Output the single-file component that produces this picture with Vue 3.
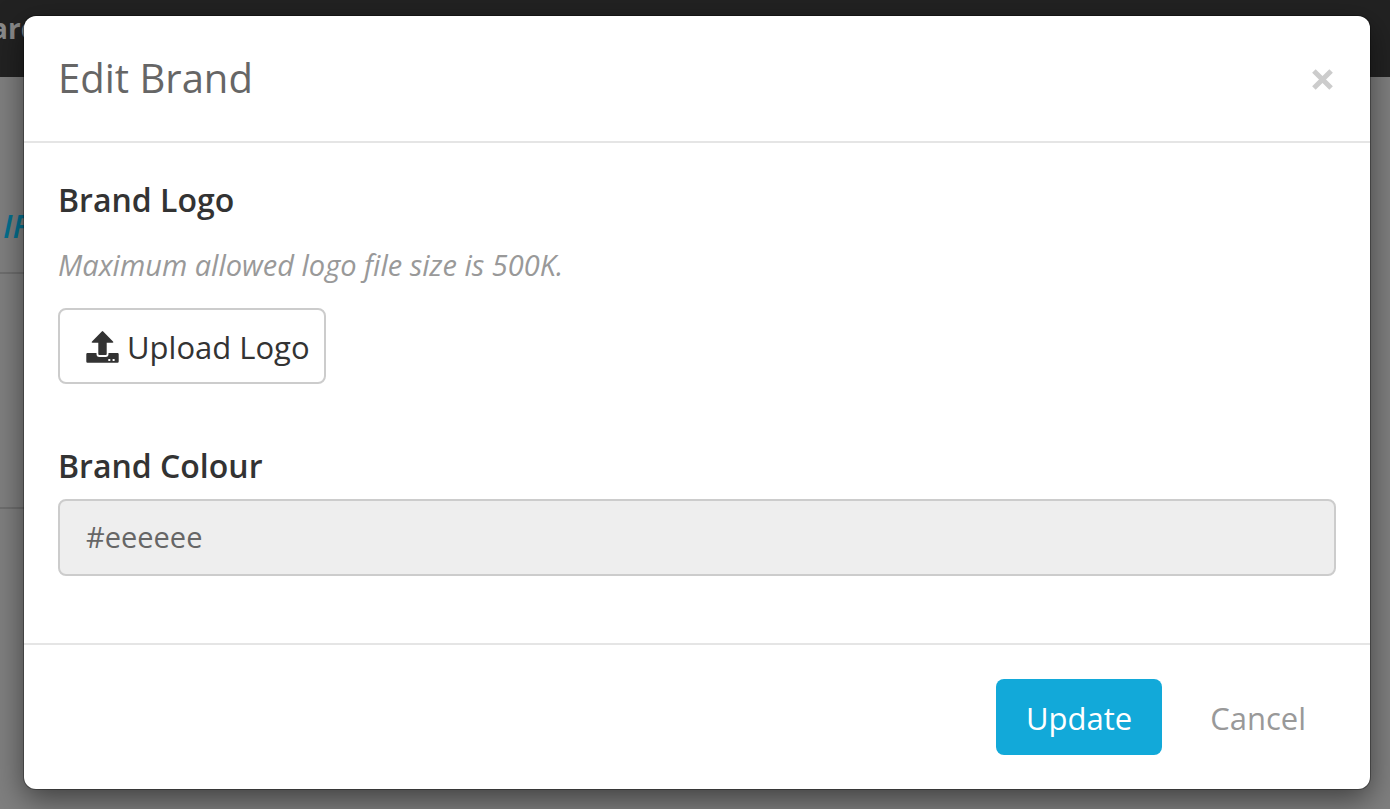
<script setup>
import { ref } from 'vue'

const colour = ref('#eeeeee')
</script>

<template>
  <div class="page">
    <div class="backdrop-page" aria-hidden="true">
      <div class="topbar"><span class="nav-text">arc</span></div>
      <div class="section first"><span class="page-link">IF</span></div>
      <div class="section second"></div>
    </div>

    <div class="overlay">
      <form class="modal" role="dialog" aria-labelledby="dialog-title" @submit.prevent>
        <header class="modal-header">
          <h1 id="dialog-title">Edit Brand</h1>
          <button class="close" type="button" aria-label="Close">
            <svg viewBox="0 0 21 21" width="21" height="21" aria-hidden="true">
              <path d="M1.9 1.9L19.1 19.1M19.1 1.9L1.9 19.1" fill="none" stroke="#ccc" stroke-width="5" />
            </svg>
          </button>
        </header>

        <div class="modal-body">
          <h2 class="label">Brand Logo</h2>
          <p class="hint">Maximum allowed logo file size is 500K.</p>
          <button class="btn upload" type="button">
            <svg viewBox="0 0 33 32" width="33" height="32" aria-hidden="true">
              <path fill="#333" d="M15.8 .4Q16.5-.3 17.2.4L27 10.4Q28 11.7 26.4 11.7H20.7V23Q20.7 24 19.7 24H13.3Q12.3 24 12.3 23V11.7H6.6Q5 11.7 6 10.4Z" />
              <path fill="#333" fill-rule="evenodd" d="M1.5 22H10.5V23Q10.5 26 13.3 26H19.7Q22.5 26 22.5 23V22H31.5Q32.7 22 32.7 23.2V30.6Q32.7 31.8 31.5 31.8H1.5Q.3 31.8.3 30.6V23.2Q.3 22 1.5 22ZM22.3 28V30H24.3V28ZM26.6 28V30H28.6V28Z" />
            </svg>
            <span>Upload Logo</span>
          </button>
          <label class="label colour-label" for="brand-colour">Brand Colour</label>
          <input id="brand-colour" v-model="colour" class="colour" type="text" />
        </div>

        <footer class="modal-footer">
          <button class="btn update" type="submit">Update</button>
          <button class="btn cancel" type="button">Cancel</button>
        </footer>
      </form>
    </div>
  </div>
</template>

<style>
body {
  margin: 0;
}
</style>

<style scoped>
.page {
  position: relative;
  min-height: 100vh;
  overflow: hidden;
  background: #7f7f7f;
  color: #333;
  font-family: "Open Sans", "Noto Sans", sans-serif;
}
.page * {
  box-sizing: border-box;
}
.backdrop-page {
  position: absolute;
  inset: 0;
}
.topbar {
  display: flex;
  align-items: center;
  height: 77px;
  padding-bottom: 22px;
  background: #222;
}
.nav-text {
  margin-left: -9px;
  color: #8a8a8a;
  font-size: 28px;
  font-weight: 700;
  line-height: 36px;
}
.section {
  display: flex;
  align-items: flex-end;
  width: 50%;
  border-bottom: 2px solid #6e6e6e;
}
.first {
  height: 197px;
  padding: 0 3px 24px;
}
.second {
  height: 235px;
}
.page-link {
  color: #04708f;
  font-size: 32px;
  font-style: italic;
  font-weight: 600;
  line-height: 44px;
}
.overlay {
  position: relative;
  padding: 16px 20px 20px 24px;
}
.modal {
  border-radius: 12px;
  background: #fff;
  box-shadow: 0 0 0 1px rgba(0, 0, 0, .3), 0 10px 30px rgba(0, 0, 0, .5);
}
.modal-header {
  display: flex;
  align-items: center;
  justify-content: space-between;
  padding: 34px;
  border-bottom: 2px solid #e5e5e5;
}
h1 {
  margin: 0;
  color: #666;
  font-size: 40px;
  font-weight: 400;
  line-height: 56px;
}
button {
  font-family: inherit;
  cursor: pointer;
}
.close {
  display: flex;
  padding: 4px 3px 2px;
  border: 0;
  background: none;
}
.modal-header {
  padding-bottom: 35px;
}
.modal-body {
  display: flex;
  flex-direction: column;
  align-items: flex-start;
  padding: 34px 34px 67px;
}
.label {
  margin: 0;
  font-size: 32px;
  font-weight: 600;
  line-height: 46px;
}
.hint {
  margin: 20px 0 21px;
  color: #999;
  font-size: 29px;
  font-style: italic;
  line-height: 44px;
}
.btn {
  display: flex;
  align-items: center;
  justify-content: center;
  height: 76px;
  padding: 2px 28px 0;
  border: 2px solid transparent;
  border-radius: 8px;
  background: none;
  font-size: 31px;
  line-height: 44px;
}
.upload {
  gap: 8px;
  padding-right: 14px;
  padding-left: 26px;
  border-color: #ccc;
  background: #fff;
  color: #333;
}
.colour-label {
  margin: 59px 0 10px;
}
.colour {
  width: 100%;
  height: 77px;
  padding: 0 26px 2px;
  border: 2px solid #ccc;
  border-radius: 8px;
  background: #eee;
  color: #666;
  font-family: inherit;
  font-size: 29px;
}
.modal-footer {
  display: flex;
  justify-content: flex-end;
  gap: 18px;
  padding: 34px;
  border-top: 2px solid #e5e5e5;
}
.update {
  background: #12a9d9;
  color: #fff;
}
.cancel {
  color: #999;
}
</style>
